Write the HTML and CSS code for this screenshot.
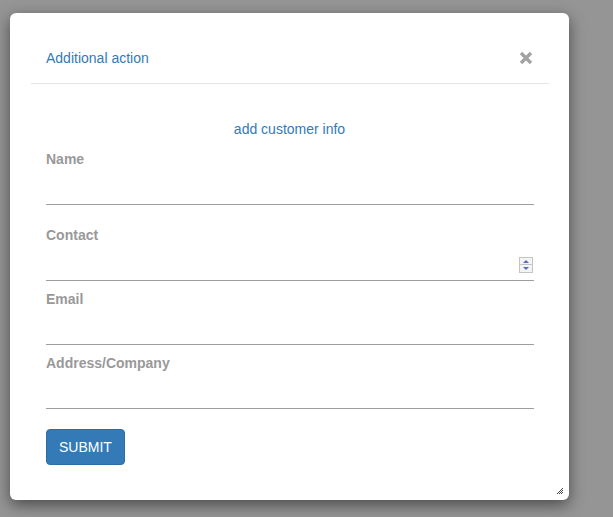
FILE: index.html
```html
<!DOCTYPE html>
<html>
<head>
<meta charset="utf-8">
<link rel="stylesheet" href="styles.css">
</head>
<body>
<div class="modal">
  <div class="modal-header">
    <span class="title">Additional action</span>
    <button class="close" aria-label="Close">
      <svg width="14" height="14" viewBox="0 0 14 14"><path d="M2 2 L12 12 M12 2 L2 12" stroke="#a3a3a3" stroke-width="3.4" stroke-linecap="butt"/></svg>
    </button>
  </div>
  <div class="modal-body">
    <div class="subtitle">add customer info</div>
    <div class="group first">
      <label class="lbl">Name</label>
      <div class="field"><input class="inp" type="text"></div>
    </div>
    <div class="group gap-l">
      <label class="lbl">Contact</label>
      <div class="field">
        <input class="inp" type="text">
        <span class="spin">
          <span class="spin-btn"><span class="arr up"></span></span>
          <span class="spin-btn"><span class="arr down"></span></span>
        </span>
      </div>
    </div>
    <div class="group gap-s">
      <label class="lbl">Email</label>
      <div class="field"><input class="inp" type="text"></div>
    </div>
    <div class="group gap-s">
      <label class="lbl">Address/Company</label>
      <div class="field"><input class="inp" type="text"></div>
    </div>
    <button class="submit">SUBMIT</button>
  </div>
  <svg class="resize" width="8" height="8" viewBox="0 0 8 8">
    <path d="M7 1 L1 7 M7 3 L3 7 M7 5 L5 7" stroke="#444" stroke-width="1"/>
  </svg>
</div>
</body>
</html>
```
FILE: styles.css
```css
html, body {
  margin: 0;
  padding: 0;
}
body {
  background: #959595;
  font-family: "Liberation Sans", Arial, sans-serif;
  font-size: 14px;
  line-height: 20px;
  padding: 13px 0 0 10px;
  height: 517px;
  box-sizing: border-box;
  overflow: hidden;
}
.modal {
  position: relative;
  width: 559px;
  height: 487px;
  background: #fff;
  border-radius: 6px;
  box-shadow: 0 5px 15px rgba(0, 0, 0, 0.5);
  box-sizing: border-box;
}
.modal-header {
  margin: 0 20px 0 21px;
  padding: 35px 16px 15px 15px;
  border-bottom: 1px solid #e5e5e5;
  display: flex;
  align-items: center;
  justify-content: space-between;
}
.title {
  color: #337ab7;
  font-size: 14px;
}
.close {
  border: 0;
  background: none;
  padding: 0;
  margin: 0;
  width: 14px;
  height: 14px;
  display: block;
}
.close svg {
  display: block;
}
.modal-body {
  padding: 35px 35px 0 36px;
}
.subtitle {
  text-align: center;
  color: #337ab7;
  margin-left: -1px;
}
.group {
  display: flex;
  flex-direction: column;
}
.group.first {
  margin-top: 10px;
}
.group.gap-l {
  margin-top: 20px;
}
.group.gap-s {
  margin-top: 8px;
}
.lbl {
  font-weight: bold;
  color: #999;
}
.field {
  display: flex;
  align-items: flex-end;
  height: 36px;
  border-bottom: 1px solid #9e9e9e;
  box-sizing: border-box;
  padding-bottom: 7px;
}
.inp {
  flex: 1;
  border: 0;
  outline: 0;
  background: transparent;
  font: inherit;
  padding: 0;
  height: 20px;
  min-width: 0;
}
.spin {
  display: flex;
  flex-direction: column;
  width: 14px;
  margin-right: 1px;
}
.spin-btn {
  height: 8px;
  background: #f4f4f4;
  border: 1px solid #c4c4c4;
  box-sizing: border-box;
  display: flex;
  align-items: center;
  justify-content: center;
}
.spin-btn + .spin-btn {
  border-top: 0;
  height: 8px;
}
.arr {
  width: 0;
  height: 0;
  border-left: 3px solid transparent;
  border-right: 3px solid transparent;
}
.arr.up {
  border-bottom: 3px solid #5a6fb8;
}
.arr.down {
  border-top: 3px solid #5a6fb8;
}
.submit {
  margin-top: 20px;
  display: block;
  background: #337ab7;
  border: 1px solid #2e6da4;
  border-radius: 4px;
  color: #fff;
  font: inherit;
  font-size: 14px;
  line-height: 20px;
  padding: 7px 12px;
  height: 36px;
  box-sizing: border-box;
}
.resize {
  position: absolute;
  right: 5px;
  bottom: 5px;
  display: block;
}
```
